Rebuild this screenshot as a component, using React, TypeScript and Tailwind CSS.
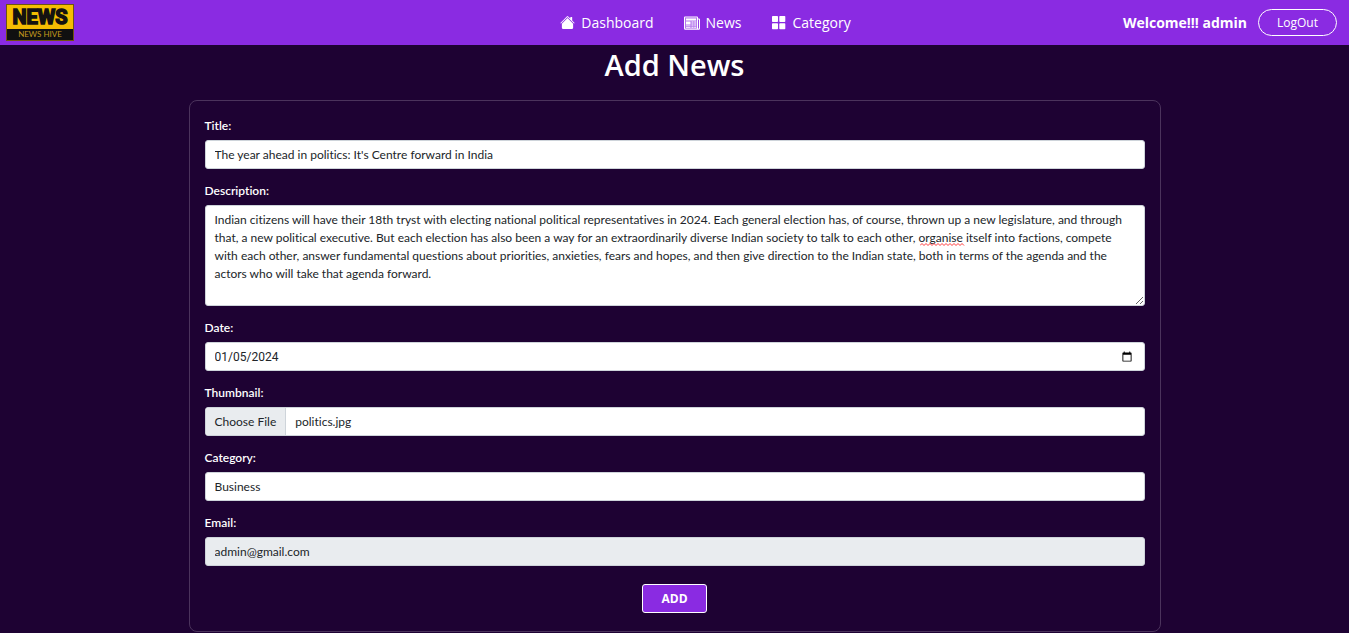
import { useEffect, useRef, useState } from "react";
import type { ReactNode } from "react";

const DESCRIPTION =
  "Indian citizens will have their 18th tryst with electing national political representatives in 2024. Each general election has, of course, thrown up a new legislature, and through that, a new political executive. But each election has also been a way for an extraordinarily diverse Indian society to talk to each other, organise itself into factions, compete with each other, answer fundamental questions about priorities, anxieties, fears and hopes, and then give direction to the Indian state, both in terms of the agenda and the actors who will take that agenda forward.";

const control =
  "block w-full h-[29px] rounded-[3px] border border-[#ced4da] bg-white px-[9px] text-xs leading-[18px] text-[#212529] outline-none";

function Logo() {
  return (
    <svg viewBox="0 0 68 37" className="h-[37px] w-[68px]" role="img" aria-label="News Hive">
      <rect width="68" height="37" fill="#6f5410" />
      <rect x="1" y="1" width="66" height="24" fill="#f5bd02" />
      <rect x="1" y="25" width="66" height="11" fill="#101010" />
      <text
        x="34"
        y="20"
        textAnchor="middle"
        fontFamily="Roboto, sans-serif"
        fontWeight="700"
        fontSize="20"
        fill="#141210"
        stroke="#141210"
        strokeWidth="1.5"
      >
        NEWS
      </text>
      <text
        x="34"
        y="33"
        textAnchor="middle"
        fontFamily="Lato, sans-serif"
        fontSize="8"
        fill="#c39a1c"
      >
        NEWS HIVE
      </text>
    </svg>
  );
}

function HomeIcon() {
  return (
    <svg viewBox="0 0 16 16" className="size-[15px]" fill="currentColor" aria-hidden="true">
      <path d="M8.707 1.5a1 1 0 0 0-1.414 0L.646 8.146a.5.5 0 0 0 .708.708L8 2.207l6.646 6.647a.5.5 0 0 0 .708-.708L13 5.793V2.5a.5.5 0 0 0-.5-.5h-1a.5.5 0 0 0-.5.5v1.293L8.707 1.5Z" />
      <path d="m8 3.293 6 6V13.5a1.5 1.5 0 0 1-1.5 1.5h-9A1.5 1.5 0 0 1 2 13.5V9.293l6-6Z" />
    </svg>
  );
}

function NewsIcon() {
  return (
    <svg viewBox="0 0 16 16" className="size-4" fill="currentColor" aria-hidden="true">
      <path d="M0 2.5A1 1 0 0 1 1 1.500h12a1 1 0 0 1 1 1v1h1a1 1 0 0 1 1 1v9a1.200 1.200 0 0 1-1.200 1.200H1.200A1.200 1.200 0 0 1 0 13.500zM1 2.500v11h12v-11zM14 4.500v9h.9v-9z" fillRule="evenodd" />
      <path d="M1 2.500h12v11H1z" opacity="0.35" />
      <path d="M2 3.500h10v2H2zM2 6.500h4.500v3H2zM2 10.500h4.500v.8H2zM2 12h4.500v.7H2zM7.500 6.500h2v1h-2zM10.200 6.500h2v1h-2zM7.500 8.500h2v1h-2zM10.200 8.500h2v1h-2zM7.500 10.500h2v.8h-2zM10.200 10.500h2v.8h-2zM7.500 12h2v.7h-2zM10.200 12h2v.7h-2z" />
    </svg>
  );
}

function GridIcon() {
  return (
    <svg viewBox="0 0 15 15" className="size-[15px]" fill="currentColor" aria-hidden="true">
      <rect x="1" y="1" width="6" height="6" rx="0.7" />
      <rect x="8.300" y="1" width="6" height="6" rx="0.7" />
      <rect x="1" y="8.300" width="6" height="6" rx="0.7" />
      <rect x="8.300" y="8.300" width="6" height="6" rx="0.7" />
    </svg>
  );
}

function NavLink({ icon, children }: { icon: ReactNode; children: ReactNode }) {
  return (
    <a href="#" className="flex items-center gap-[6px] text-sm">
      {icon}
      {children}
    </a>
  );
}

function Field({ id, label, children }: { id: string; label: string; children: ReactNode }) {
  return (
    <div className="flex flex-col gap-[5px]">
      <label htmlFor={id} className="text-xs leading-[18px] font-semibold text-white">
        {label}
      </label>
      {children}
    </div>
  );
}

export default function App() {
  const fileRef = useRef<HTMLInputElement>(null);
  const [title, setTitle] = useState("The year ahead in politics: It's Centre forward in India");
  const [description, setDescription] = useState(DESCRIPTION);
  const [date, setDate] = useState("2024-01-05");

  useEffect(() => {
    const transfer = new DataTransfer();
    transfer.items.add(new File([""], "politics.jpg", { type: "image/jpeg" }));
    if (fileRef.current) fileRef.current.files = transfer.files;
  }, []);

  return (
    <div className="min-h-screen border-r border-white bg-[#1e0233] font-['Open_Sans',sans-serif] text-white">
      <header className="grid h-[45px] grid-cols-[1fr_auto_1fr] items-center bg-[#8a2be2] pr-3 pl-1.5">
        <a href="#" className="justify-self-start">
          <Logo />
        </a>
        <nav className="ml-[68px] flex items-center gap-[30px]">
          <NavLink icon={<HomeIcon />}>Dashboard</NavLink>
          <NavLink icon={<NewsIcon />}>News</NavLink>
          <NavLink icon={<GridIcon />}>Category</NavLink>
        </nav>
        <div className="flex items-center gap-[11px] justify-self-end">
          <span className="text-sm font-bold">Welcome!!! admin</span>
          <button type="button" className="h-[27px] rounded-full border border-white px-[18px] text-xs">
            LogOut
          </button>
        </div>
      </header>

      <main>
        <h1 className="text-center text-[29px] leading-10 font-semibold">Add News</h1>
        <form
          className="mx-auto mt-[15px] flex max-w-[972px] flex-col gap-[13px] rounded-lg border border-[#4b335c] px-[15px] pt-4 pb-[18px] font-['Lato',sans-serif] [font-variant-ligatures:none]"
          onSubmit={(e) => e.preventDefault()}
        >
          <Field id="title" label="Title:">
            <input id="title" type="text" className={control} value={title} onChange={(e) => setTitle(e.target.value)} />
          </Field>
          <Field id="description" label="Description:">
            <div className="relative">
              <textarea
                id="description"
                className="block h-[101px] w-full resize rounded-[3px] border border-[#ced4da] bg-white px-[9px] py-[5px] text-xs leading-[18px] text-[#212529] outline-none"
                value={description}
                onChange={(e) => setDescription(e.target.value)}
              />
              {description === DESCRIPTION && (
                <svg
                  className="pointer-events-none absolute top-[38px] left-[715px] h-[3px] w-[45px]"
                  viewBox="0 0 45 3"
                  fill="none"
                  stroke="#ff3b3b"
                  aria-hidden="true"
                >
                  <path d="M0 2.500 L2 .5 L4 2.500 L6 .5 L8 2.500 L10 .5 L12 2.500 L14 .5 L16 2.500 L18 .5 L20 2.500 L22 .5 L24 2.500 L26 .5 L28 2.500 L30 .5 L32 2.500 L34 .5 L36 2.500 L38 .5 L40 2.500 L42 .5 L44 2.500" />
                </svg>
              )}
            </div>
          </Field>
          <Field id="date" label="Date:">
            <input
              id="date"
              type="date"
              className={`${control} font-['Roboto',sans-serif] [&::-webkit-datetime-edit-day-field]:p-0 [&::-webkit-datetime-edit-month-field]:p-0 [&::-webkit-datetime-edit-year-field]:p-0`}
              value={date}
              onChange={(e) => setDate(e.target.value)}
            />
          </Field>
          <Field id="thumbnail" label="Thumbnail:">
            <input
              ref={fileRef}
              id="thumbnail"
              type="file"
              className="block h-[29px] w-full overflow-hidden rounded-[3px] border border-[#ced4da] bg-white text-xs text-[#212529] outline-none file:mr-[9px] file:h-[27px] file:border-r file:border-[#ced4da] file:bg-[#e9ecef] file:px-[9px] file:text-xs file:text-[#212529]"
            />
          </Field>
          <Field id="category" label="Category:">
            <select id="category" defaultValue="Business" className={`${control} appearance-none`}>
              <option>Business</option>
            </select>
          </Field>
          <Field id="email" label="Email:">
            <input
              id="email"
              type="email"
              readOnly
              value="admin@gmail.com"
              className="block h-[29px] w-full rounded-[3px] border border-[#ced4da] bg-[#e9ecef] px-[9px] text-xs leading-[18px] text-[#212529] outline-none"
            />
          </Field>
          <button
            type="submit"
            className="mt-[5px] h-[29px] self-center rounded-[3px] border border-white bg-[#8a2be2] px-[18px] font-['Open_Sans',sans-serif] text-xs font-bold"
          >
            ADD
          </button>
        </form>
      </main>
    </div>
  );
}
